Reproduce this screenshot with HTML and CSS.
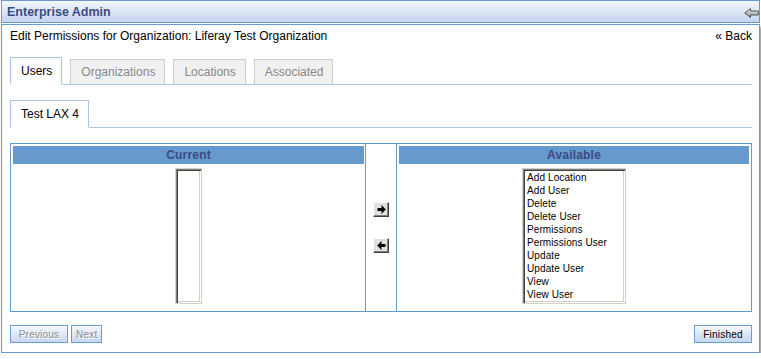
FILE: index.html
```html
<!DOCTYPE html>
<html lang="en">
<head>
<meta charset="utf-8">
<title>Enterprise Admin</title>
<link rel="stylesheet" href="styles.css">
</head>
<body>
<div class="portlet">
  <div class="title-bar">
    <span class="title">Enterprise Admin</span>
    <svg class="title-icon" width="15" height="10" viewBox="0 0 15 10" aria-hidden="true">
      <defs>
        <linearGradient id="g" x1="0" y1="0" x2="0" y2="1">
          <stop offset="0" stop-color="#f2f2f2"/>
          <stop offset="1" stop-color="#8c8c8c"/>
        </linearGradient>
      </defs>
      <path d="M0.7 5 L6.5 0.6 V3 H14.4 V7 H6.5 V9.4 Z" fill="url(#g)" stroke="#4a4a4a" stroke-width="0.9" stroke-linejoin="round"/>
    </svg>
  </div>
  <div class="content">
    <div class="page-header">
      <span>Edit Permissions for Organization: Liferay Test Organization</span>
      <a class="back" href="#">« Back</a>
    </div>

    <div class="tabs main-tabs">
      <div class="tab active">Users</div>
      <div class="tab">Organizations</div>
      <div class="tab">Locations</div>
      <div class="tab">Associated</div>
    </div>

    <div class="tabs sub-tabs">
      <div class="tab active">Test LAX 4</div>
    </div>

    <div class="perm-table">
      <div class="col">
        <div class="col-head">Current</div>
        <div class="listbox narrow" role="listbox"></div>
      </div>
      <div class="mid">
        <button class="arrow-btn" type="button" aria-label="Remove">
          <svg width="9" height="9" viewBox="0 0 9 9"><path d="M0.5 3H4.5V0L8.8 4.5L4.5 9V6H0.5Z" fill="#000"/></svg>
        </button>
        <button class="arrow-btn" type="button" aria-label="Add">
          <svg width="9" height="9" viewBox="0 0 9 9"><path d="M8.5 3H4.5V0L0.2 4.5L4.5 9V6H8.5Z" fill="#000"/></svg>
        </button>
      </div>
      <div class="col">
        <div class="col-head">Available</div>
        <div class="listbox wide" role="listbox">
          <div class="opt">Add Location</div>
          <div class="opt">Add User</div>
          <div class="opt">Delete</div>
          <div class="opt">Delete User</div>
          <div class="opt">Permissions</div>
          <div class="opt">Permissions User</div>
          <div class="opt">Update</div>
          <div class="opt">Update User</div>
          <div class="opt">View</div>
          <div class="opt">View User</div>
        </div>
      </div>
    </div>

    <div class="actions">
      <div class="left-actions">
        <button class="btn wide disabled" type="button">Previous</button>
        <button class="btn disabled" type="button">Next</button>
      </div>
      <button class="btn wide" type="button">Finished</button>
    </div>
  </div>
</div>
</body>
</html>
```

FILE: styles.css
```css
* { box-sizing: border-box; }

body {
  margin: 0;
  padding: 0 0 0 1px;
  background: #fff;
  font-family: "Liberation Sans", Arial, sans-serif;
  font-size: 12px;
  color: #000;
}

.portlet {
  width: 759px;
}

.title-bar {
  height: 23px;
  border: 1px solid #6b99d0;
  background: linear-gradient(#f4f7fc, #c5d5ee);
  display: flex;
  align-items: center;
  justify-content: space-between;
  padding: 0 0 0 5px;
}

.title {
  font-weight: bold;
  font-size: 12.5px;
  color: #3d4b82;
}

.title-icon {
  margin-top: 3px;
}

.content {
  margin-top: 1px;
  border: 1px solid #6b99d0;
  padding: 3px 7px 9px 8px;
  box-shadow: 2px 3px 3px rgba(0, 0, 0, 0.4);
}

.page-header {
  height: 16px;
  line-height: 16px;
  display: flex;
  justify-content: space-between;
}

.back {
  color: #000;
  text-decoration: none;
}

.tabs {
  display: flex;
  align-items: flex-end;
  gap: 8px;
  border-bottom: 1px solid #a9c6e9;
}

.main-tabs { margin-top: 13px; }
.sub-tabs { margin-top: 15px; }

.tab {
  height: 25px;
  padding: 0 9px 0 10px;
  display: flex;
  align-items: center;
  border: 1px solid #cccccc;
  border-bottom: 0;
  background: #f1f1f1;
  color: #888888;
}

.tab.active {
  height: 28px;
  margin-bottom: -1px;
  border: 1px solid #a9c6e9;
  border-bottom-color: #fff;
  background: #fff;
  color: #000;
}

.perm-table {
  margin-top: 15px;
  border: 1px solid #6699cc;
  display: flex;
}

.col {
  width: 355px;
  padding: 2px 1px 7px 2px;
  display: flex;
  flex-direction: column;
  align-items: center;
}

.col:first-child {
  border-right: 1px solid #6699cc;
}

.col:last-child {
  width: 354px;
  border-left: 1px solid #6699cc;
}

.col-head {
  align-self: stretch;
  height: 18px;
  line-height: 18px;
  background: #6699cc;
  color: #3d4b85;
  font-weight: bold;
  font-size: 12px;
  letter-spacing: 0.2px;
  text-align: center;
}

.listbox {
  margin-top: 4px;
  height: 136px;
  border: 1px solid #d4d0c8;
  box-shadow:
    inset 1px 1px 0 #808080,
    inset 2px 2px 0 #404040,
    inset -1px -1px 0 #ffffff,
    inset -2px -2px 0 #d4d0c8;
  padding: 2px 2px 2px 4px;
  background: #fff;
  font-size: 10px;
  letter-spacing: 0.1px;
}

.listbox.narrow { width: 27px; }
.listbox.wide { width: 104px; }

.opt {
  height: 13px;
  line-height: 13px;
  white-space: nowrap;
}

.mid {
  width: 30px;
  display: flex;
  flex-direction: column;
  align-items: center;
  justify-content: center;
  gap: 21px;
}

.arrow-btn {
  width: 16px;
  height: 15px;
  padding: 0;
  margin: 0;
  border: 1px solid;
  border-color: #ffffff #404040 #404040 #ffffff;
  box-shadow: inset -1px -1px 0 #808080;
  background: #e2e0dc;
  display: flex;
  align-items: center;
  justify-content: center;
}

.arrow-btn svg { display: block; }

.actions {
  margin-top: 13px;
  display: flex;
  justify-content: space-between;
  align-items: center;
}

.left-actions {
  display: flex;
  gap: 3px;
}

.btn {
  height: 18px;
  padding: 0 4px;
  margin: 0;
  border: 1px solid #6b9bd2;
  background: linear-gradient(#f6f9fd, #c6d7f0);
  box-shadow: inset 0 1px 0 #ffffff;
  font-family: "Liberation Sans", Arial, sans-serif;
  font-size: 10px;
  letter-spacing: 0.2px;
  color: #000;
  text-align: center;
}

.btn.wide { min-width: 58px; }

.btn.disabled {
  color: #8d8d8d;
  text-shadow: 1px 1px 0 #ffffff;
}
```
